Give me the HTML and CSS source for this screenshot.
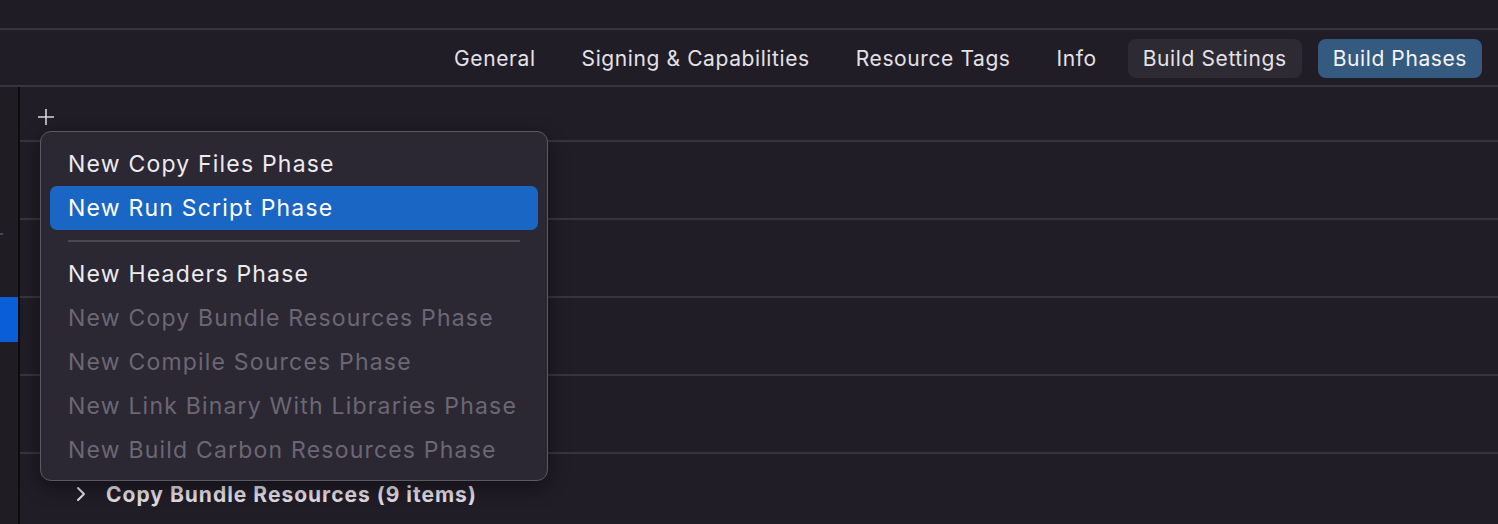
FILE: index.html
```html
<!DOCTYPE html>
<html>
<head>
<meta charset="utf-8">
<link rel="stylesheet" href="styles.css">
</head>
<body>
<div class="app">
  <div class="topstrip"></div>
  <div class="tabbar">
    <div class="tab">General</div>
    <div class="tab">Signing &amp; Capabilities</div>
    <div class="tab">Resource Tags</div>
    <div class="tab">Info</div>
    <div class="tab pill">Build Settings</div>
    <div class="tab pill active">Build Phases</div>
  </div>
  <div class="content">
    <div class="sidebar">
      <div class="tick"></div>
      <div class="sel"></div>
    </div>
    <div class="divider"></div>
    <div class="main">
      <div class="plusrow">
        <svg class="plus" width="18" height="18" viewBox="0 0 18 18"><path d="M9 1V17M1 9H17" stroke="#d8d6dc" stroke-width="1.6" fill="none"/></svg>
      </div>
      <div class="row"></div>
      <div class="row"></div>
      <div class="row"></div>
      <div class="row"></div>
      <div class="row last">
        <svg class="chev" width="12" height="16" viewBox="0 0 12 16"><path d="M3 2L9 8L3 14" stroke="#e6e4e8" stroke-width="2" fill="none" stroke-linecap="round" stroke-linejoin="round"/></svg>
        <span class="rowtitle">Copy Bundle Resources (9 items)</span>
      </div>
    </div>
  </div>
  <div class="menu">
    <div class="item">New Copy Files Phase</div>
    <div class="item hl">New Run Script Phase</div>
    <div class="sep"></div>
    <div class="item">New Headers Phase</div>
    <div class="item dis">New Copy Bundle Resources Phase</div>
    <div class="item dis">New Compile Sources Phase</div>
    <div class="item dis">New Link Binary With Libraries Phase</div>
    <div class="item dis">New Build Carbon Resources Phase</div>
  </div>
</div>
</body>
</html>
```
FILE: styles.css
```css
* { box-sizing: border-box; }
html, body { margin: 0; padding: 0; }
body {
  width: 1498px;
  height: 524px;
  overflow: hidden;
  background: #211d27;
  font-family: Inter, "Liberation Sans", sans-serif;
  color: #e6e4e8;
}
.app { position: relative; width: 1498px; height: 524px; display: flex; flex-direction: column; overflow: hidden; }
.topstrip { height: 30px; background: #201c26; border-bottom: 2px solid #39353f; flex: none; }
.tabbar {
  height: 57px;
  flex: none;
  display: flex;
  align-items: center;
  justify-content: flex-end;
  gap: 16px;
  padding: 2px 16px 0 0;
  border-bottom: 2px solid #39353f;
}
.tab {
  font-size: 21px;
  letter-spacing: 0.6px;
  line-height: 39px;
  height: 39px;
  padding: 0 15px;
  border-radius: 8px;
  color: #e4e2e6;
}
.pill { background: #2d2a33; }
.pill.active { background: #355a80; color: #f2f4f8; }
.content { flex: 1; display: flex; min-height: 0; }
.sidebar { width: 18px; flex: none; background: #1f1c23; display: flex; flex-direction: column; }
.tick { margin-top: 146px; width: 3px; height: 2px; background: #4a4650; }
.sel { margin-top: 62px; width: 18px; height: 45px; background: #0a5fd9; }
.divider { width: 2px; flex: none; background: #0c0b0e; }
.main { flex: 1; display: flex; flex-direction: column; overflow: hidden; }
.plusrow { height: 55px; flex: none; padding: 21px 0 0 17px; border-bottom: 2px solid #39353f; }
.plus { display: block; }
.row { height: 78px; flex: none; border-bottom: 2px solid #39353f; }
.row.last { border-bottom: none; display: flex; align-items: center; padding: 2px 0 0 55px; }
.chev { margin-right: 19px; }
.rowtitle { font-size: 21px; font-weight: 700; letter-spacing: 1px; color: #e0dee4; }
.menu {
  position: absolute;
  left: 40px;
  top: 131px;
  width: 508px;
  height: 350px;
  background: #2b2733;
  border: 1.5px solid #5d5963;
  border-radius: 11px;
  padding: 10px 9px;
  box-shadow: 0 6px 20px rgba(0,0,0,0.45);
  display: flex;
  flex-direction: column;
}
.item {
  height: 44px;
  line-height: 44px;
  font-size: 23px;
  letter-spacing: 1.2px;
  padding-left: 18px;
  border-radius: 7px;
  color: #ecebee;
  white-space: nowrap;
  flex: none;
}
.item.hl { background: #1a66c4; color: #ffffff; }
.item.dis { color: #6c6774; }
.sep { height: 2px; flex: none; margin: 10px 18px 10px 18px; background: #4c4852; }
```
